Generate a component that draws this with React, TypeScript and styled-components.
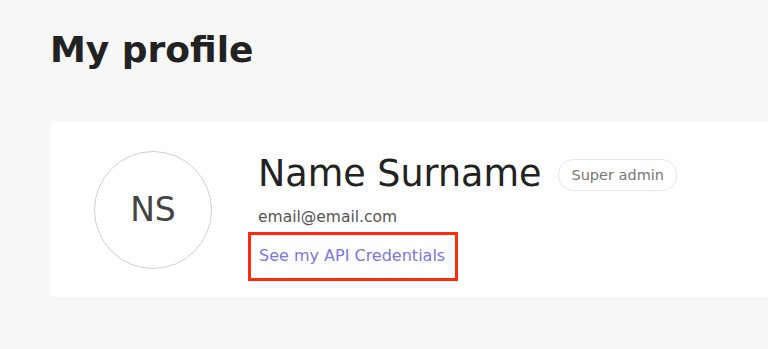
import React from 'react'
import styled, { createGlobalStyle } from 'styled-components'

const GlobalStyle = createGlobalStyle`
  html, body {
    margin: 0;
    padding: 0;
    background: #f7f7f7;
    overflow: hidden;
  }
  body {
    font-family: "DejaVu Sans", "Open Sans", sans-serif;
  }
`

const Page = styled.div`
  width: 768px;
  height: 349px;
  padding: 28px 0 0 50px;
  box-sizing: border-box;
  overflow: hidden;
`

const Title = styled.h1`
  margin: 0;
  font-size: 36px;
  line-height: 44px;
  font-weight: 700;
  color: #222;
`

const Card = styled.div`
  margin-top: 50px;
  width: 760px;
  height: 175px;
  background: #fff;
  border-radius: 6px;
  display: flex;
  align-items: center;
  padding-left: 44px;
  box-sizing: border-box;
  gap: 46px;
`

const Avatar = styled.div`
  width: 118px;
  height: 118px;
  border-radius: 50%;
  border: 1px solid #cfcfcf;
  box-sizing: border-box;
  display: flex;
  align-items: center;
  justify-content: center;
  font-size: 33px;
  color: #444;
  flex-shrink: 0;
`

const Info = styled.div`
  display: flex;
  flex-direction: column;
  align-items: flex-start;
  margin-top: 14px;
`

const NameRow = styled.div`
  display: flex;
  align-items: center;
  gap: 17px;
`

const Name = styled.div`
  font-size: 36.5px;
  line-height: 44px;
  color: #222;
`

const Badge = styled.span`
  border: 1px solid #e6e6e6;
  border-radius: 15px;
  padding: 0 12px;
  height: 30px;
  display: inline-flex;
  align-items: center;
  font-size: 14.5px;
  color: #777;
  margin-top: 2px;
`

const Email = styled.div`
  margin-top: 11px;
  font-size: 15.5px;
  line-height: 20px;
  color: #555;
`

const Highlight = styled.div`
  margin-top: 5px;
  margin-left: -10px;
  border: 3px solid #ff2a0a;
  padding: 9px 10px 11px 8px;
`

const Link = styled.a`
  font-size: 16px;
  line-height: 23px;
  color: #7a76e6;
  text-decoration: none;
`

export default function App() {
  return (
    <>
      <GlobalStyle />
      <Page>
        <Title>My profile</Title>
        <Card>
          <Avatar>NS</Avatar>
          <Info>
            <NameRow>
              <Name>Name Surname</Name>
              <Badge>Super admin</Badge>
            </NameRow>
            <Email>email@email.com</Email>
            <Highlight>
              <Link href="#">See my API Credentials</Link>
            </Highlight>
          </Info>
        </Card>
      </Page>
    </>
  )
}
